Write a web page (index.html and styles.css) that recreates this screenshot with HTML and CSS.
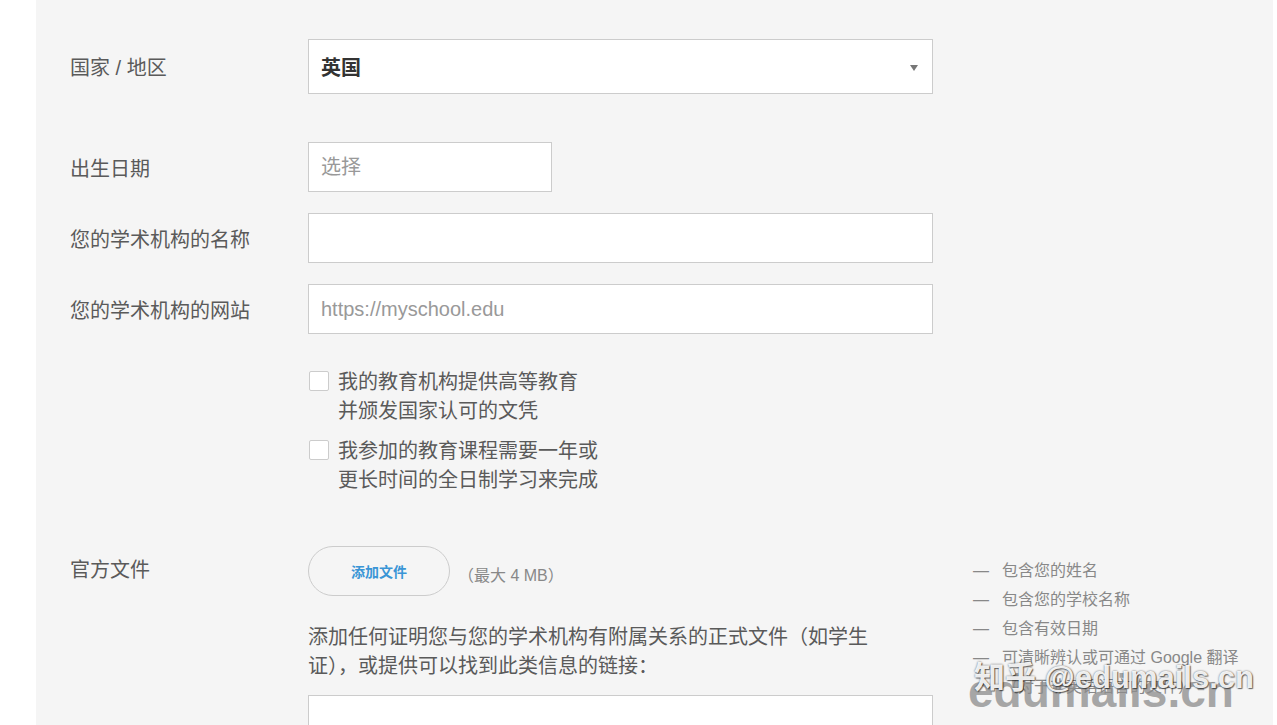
FILE: index.html
```html
<!DOCTYPE html>
<html lang="zh-CN">
<head>
  <meta charset="UTF-8">
  <meta name="viewport" content="width=device-width, initial-scale=1.0">
  <title>学术验证</title>
  <link rel="stylesheet" href="styles.css">
</head>
<body>
  <div class="panel">

    <!-- Country -->
    <div class="row row-country">
      <label class="label">国家 / 地区</label>
      <div class="select">
        <span>英国</span>
        <span class="caret"></span>
      </div>
    </div>

    <!-- Birth date -->
    <div class="row row-date">
      <label class="label">出生日期</label>
      <input class="field field-date" type="text" placeholder="选择">
    </div>

    <!-- Institution -->
    <div class="row row-name">
      <label class="label">您的学术机构的名称</label>
      <input class="field" type="text">
    </div>

    <div class="row row-site">
      <label class="label">您的学术机构的网站</label>
      <input class="field field-url" type="text" placeholder="https://myschool.edu">
    </div>

    <!-- Checkboxes -->
    <div class="check check-first">
      <input type="checkbox" class="box">
      <span class="check-text">我的教育机构提供高等教育<br>并颁发国家认可的文凭</span>
    </div>
    <div class="check">
      <input type="checkbox" class="box">
      <span class="check-text">我参加的教育课程需要一年或<br>更长时间的全日制学习来完成</span>
    </div>

    <!-- Documents -->
    <div class="row-files">
      <label class="label label-files">官方文件</label>
      <div class="files-main">
        <div class="upload">
          <button class="file-btn">添加文件</button>
          <span class="limit">（最大 4 MB）</span>
        </div>
        <p class="hint">添加任何证明您与您的学术机构有附属关系的正式文件（如学生证），或提供可以找到此类信息的链接：</p>
        <textarea class="links"></textarea>
      </div>
      <ul class="rules">
        <li><span class="dash">—</span>包含您的姓名</li>
        <li><span class="dash">—</span>包含您的学校名称</li>
        <li><span class="dash">—</span>包含有效日期</li>
        <li><span class="dash">—</span>可清晰辨认或可通过 Google 翻译</li>
        <li><span class="dash"></span>（对于非英语语言的文件）</li>
      </ul>
    </div>
  </div>

  <!-- watermark over the screenshot -->
  <div class="watermark">
    <span class="wm-back">edumails.cn</span>
    <span class="wm-front">知乎 @edumails.cn</span>
  </div>
</body>
</html>
```

FILE: styles.css
```css
/* General Styling */
body {
  margin: 0;
  background: #fff;
  font-family: 'Liberation Sans', 'Noto Sans CJK SC', sans-serif;
  color: #555;
  overflow: hidden;
}

.panel {
  margin-left: 36px;
  width: 1237px;
  min-height: 820px;
  background: #f5f5f5;
  padding: 39px 0 0 34px;
  box-sizing: border-box;
}

.row {
  display: flex;
  align-items: center;
}

.label {
  width: 238px;
  flex-shrink: 0;
  font-size: 20px;
  line-height: 29px;
  padding-top: 4px;
  color: #5a5a5a;
}

.row-date {
  margin-top: 48px;
}

.row-name,
.row-site {
  margin-top: 21px;
}

/* Select */
.select {
  width: 625px;
  height: 55px;
  box-sizing: border-box;
  background: #fff;
  border: 1px solid #ccc;
  display: flex;
  align-items: center;
  justify-content: space-between;
  padding: 0 14px 0 12px;
  font-size: 20px;
  font-weight: bold;
  color: #333;
}

.caret {
  width: 0;
  height: 0;
  border-left: 4px solid transparent;
  border-right: 4px solid transparent;
  border-top: 6px solid #777;
  margin-top: 2px;
}

/* Inputs */
.field {
  width: 625px;
  height: 50px;
  box-sizing: border-box;
  background: #fff;
  border: 1px solid #ccc;
  border-radius: 0;
  padding: 0 12px;
  font-family: 'Liberation Sans', 'Noto Sans CJK SC', sans-serif;
  font-size: 20px;
  color: #333;
  outline: none;
}

.field::placeholder {
  color: #999;
}

.field-date {
  width: 244px;
}

/* Checkboxes */
.check {
  display: flex;
  align-items: flex-start;
  margin-left: 238px;
  margin-top: 11px;
}

.check-first {
  margin-top: 34px;
}

.box {
  appearance: none;
  -webkit-appearance: none;
  width: 20px;
  height: 20px;
  margin: 3px 9px 0 1px;
  background: #fff;
  border: 1px solid #ccc;
  border-radius: 2px;
  box-sizing: border-box;
  flex-shrink: 0;
}

.check-text {
  font-size: 20px;
  line-height: 29px;
  color: #5a5a5a;
}

/* Files */
.row-files {
  display: flex;
  align-items: flex-start;
  margin-top: 51px;
}

.label-files {
  padding-top: 10px;
}

.files-main {
  width: 625px;
  flex-shrink: 0;
}

.upload {
  display: flex;
  align-items: center;
}

.file-btn {
  width: 142px;
  height: 50px;
  border: 1px solid #ccc;
  border-radius: 25px;
  background: #f5f5f5;
  color: #3a95d6;
  font-family: 'Liberation Sans', 'Noto Sans CJK SC', sans-serif;
  font-size: 14px;
  font-weight: bold;
  cursor: pointer;
}

.limit {
  margin-left: 8px;
  padding-top: 6px;
  font-size: 16px;
  color: #888;
}

.hint {
  width: 570px;
  margin: 27px 0 14px;
  font-size: 20px;
  line-height: 29px;
  color: #5a5a5a;
}

.links {
  display: block;
  width: 625px;
  height: 110px;
  box-sizing: border-box;
  background: #fff;
  border: 1px solid #ccc;
  resize: none;
  outline: none;
}

.rules {
  list-style: none;
  margin: 0 0 0 40px;
  padding: 10px 0 0;
  font-size: 16px;
  line-height: 29px;
  color: #888;
}

.dash {
  display: inline-block;
  width: 29px;
}

/* Watermark */
.watermark {
  position: absolute;
  left: 966px;
  top: 640px;
  width: 300px;
  height: 80px;
  pointer-events: none;
}

.wm-back {
  position: absolute;
  left: 2px;
  top: 24px;
  font-family: 'Liberation Sans', sans-serif;
  font-size: 46px;
  font-weight: bold;
  color: rgba(140, 140, 140, 0.75);
  white-space: nowrap;
}

.wm-front {
  position: absolute;
  left: 8px;
  top: 12px;
  font-family: 'Liberation Sans', 'Noto Sans CJK SC', sans-serif;
  font-size: 31px;
  font-weight: bold;
  color: rgba(255, 255, 255, 0.92);
  text-shadow: 0 0 2px rgba(0, 0, 0, 0.6), 1px 1px 1px rgba(0, 0, 0, 0.5);
  white-space: nowrap;
}
```
